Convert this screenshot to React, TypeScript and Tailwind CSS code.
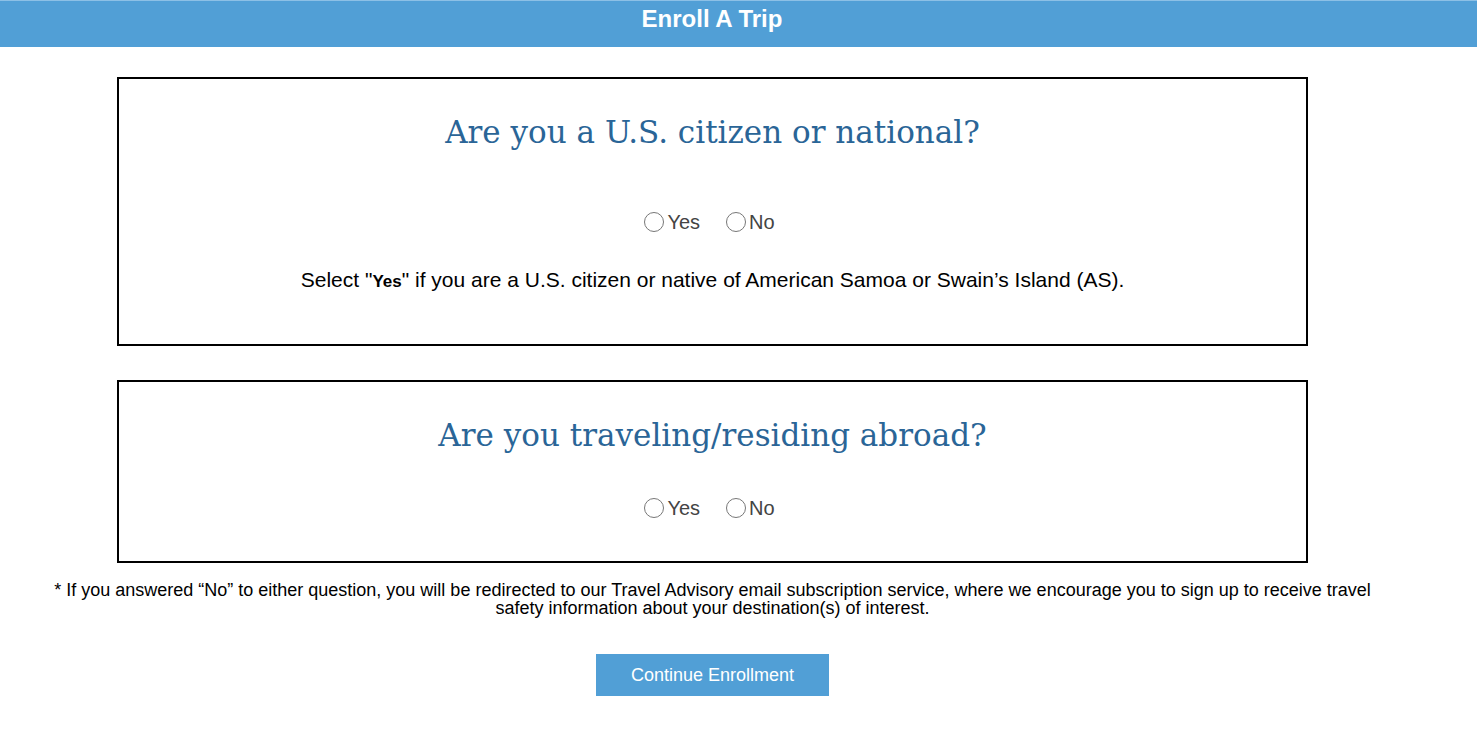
import React from 'react';

const Radio: React.FC<{ label: string }> = ({ label }) => (
  <label className="flex items-center text-[20px] leading-6 text-[#444]">
    <span className="inline-block w-[20px] h-[20px] rounded-full border border-[#777] bg-white mr-[3px]"></span>
    {label}
  </label>
);

const RadioRow: React.FC = () => (
  <div className="flex justify-center items-center gap-[26px] pr-[6px]">
    <Radio label="Yes" />
    <Radio label="No" />
  </div>
);

const App: React.FC = () => {
  return (
    <div className="min-h-screen bg-white" style={{ fontFamily: '"Liberation Sans", Arial, sans-serif' }}>
      {/* Header */}
      <header className="h-[47px] bg-[#519fd6] border-t border-[#8cc0e6] flex justify-center pt-[3px]">
        <h1 className="text-white font-bold text-[24px] leading-[30px] pr-[53px]">Enroll A Trip</h1>
      </header>

      <main className="w-[1425px] flex flex-col items-center">
        {/* Question 1 */}
        <section className="mt-[30px] w-[1191px] border-2 border-black text-center pt-[33px] pb-[50px]">
          <h2 className="text-[#2a6597] text-[31px] leading-[40px]" style={{ fontFamily: '"DejaVu Serif", Georgia, serif' }}>
            Are you a U.S. citizen or national?
          </h2>
          <div className="mt-[58px]">
            <RadioRow />
          </div>
          <p className="mt-[34px] text-[21px] leading-6 text-black">
            Select "<b className="text-[17px]">Yes</b>" if you are a U.S. citizen or native of American Samoa or Swain’s Island (AS).
          </p>
        </section>

        {/* Question 2 */}
        <section className="mt-[34px] w-[1191px] border-2 border-black text-center pt-[33px] pb-[41px]">
          <h2 className="text-[#2a6597] text-[31px] leading-[40px]" style={{ fontFamily: '"DejaVu Serif", Georgia, serif' }}>
            Are you traveling/residing abroad?
          </h2>
          <div className="mt-[41px]">
            <RadioRow />
          </div>
        </section>

        <p className="mt-[18px] px-[50px] text-center text-[18px] leading-[18px] text-black">
          * If you answered “No” to either question, you will be redirected to our Travel Advisory email subscription service, where we encourage you to sign up to receive travel safety information about your destination(s) of interest.
        </p>

        <button className="mt-[37px] w-[233px] h-[42px] bg-[#519fd6] text-white text-[18px]">
          Continue Enrollment
        </button>
      </main>
    </div>
  );
};

export default App;
